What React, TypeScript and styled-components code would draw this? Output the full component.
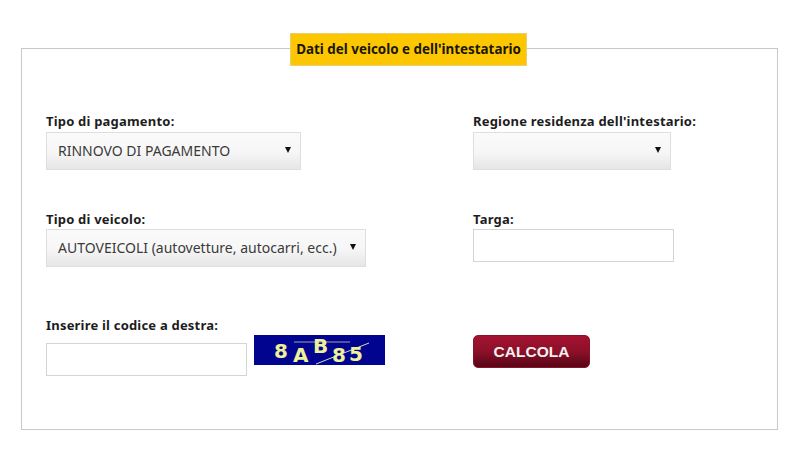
import React from "react";
import styled, { createGlobalStyle } from "styled-components";

const Global = createGlobalStyle`
  html, body { margin: 0; padding: 0; background: #fff; }
  body { width: 800px; height: 453px; overflow: hidden; font-family: "Noto Sans", "Open Sans", sans-serif; }
`;

const Page = styled.div`
  padding: 48px 22px 0 21px;
`;

const Panel = styled.section`
  position: relative;
  box-sizing: border-box;
  height: 382px;
  border: 1px solid #c9c9c9;
  padding: 63px 0 0 24px;
  display: grid;
  grid-template-columns: 427px 1fr;
  grid-template-rows: 98px 106px 1fr;
`;

const Legend = styled.h2`
  position: absolute;
  top: -16px;
  left: 268px;
  box-sizing: border-box;
  width: 237px;
  height: 33px;
  margin: 0;
  background: #fcc700;
  border: 1px solid #e8cf74;
  color: #1a1604;
  font-size: 13.4px;
  font-weight: 700;
  line-height: 30px;
  text-align: center;
  white-space: nowrap;
`;

const Field = styled.div`
  display: flex;
  flex-direction: column;
  align-items: flex-start;
`;

const Label = styled.label<{ $h?: number }>`
  height: ${(p) => p.$h ?? 20}px;
  color: #1d1d1d;
  font-size: 13px;
  font-weight: 700;
  line-height: 18px;
  letter-spacing: 0.2px;
  white-space: nowrap;
`;

const Select = styled.div<{ $w: number }>`
  box-sizing: border-box;
  width: ${(p) => p.$w}px;
  height: 38px;
  display: flex;
  align-items: center;
  justify-content: space-between;
  padding: 0 9px 2px 11px;
  border: 1px solid #dedede;
  background: linear-gradient(#fafafa 0%, #f7f7f7 50%, #e6e6e6 100%);
  color: #3a3a3a;
  font-size: 14px;
  white-space: nowrap;
`;

const Arrow = styled.svg`
  width: 6px;
  height: 6px;
  flex: none;
`;

const Input = styled.div<{ $w: number }>`
  box-sizing: border-box;
  width: ${(p) => p.$w}px;
  height: 33px;
  background: #fff;
  border: 1px solid #d4d4d4;
`;

const CaptchaRow = styled.div`
  display: flex;
  align-items: flex-start;
  gap: 7px;
  margin-top: -1px;
`;

const CaptchaInput = styled(Input)`
  margin-top: 8px;
`;

const Captcha = styled.svg`
  width: 131px;
  height: 30px;
  flex: none;
  overflow: visible;
`;

const Button = styled.button`
  box-sizing: border-box;
  width: 117px;
  height: 33px;
  margin-top: 19px;
  padding: 0;
  border: 1px solid #8e1029;
  border-radius: 5px;
  background: linear-gradient(#a31331 0%, #8d0f28 50%, #560617 100%);
  color: #f2f2f2;
  font-family: "Liberation Sans", Arial, sans-serif;
  font-size: 15.5px;
  font-weight: 700;
`;

const DownArrow = () => (
  <Arrow viewBox="0 0 6 6">
    <path d="M0 0H6L3 6Z" fill="#111" />
  </Arrow>
);

export default function App() {
  return (
    <Page>
      <Global />
      <Panel>
        <Legend>Dati del veicolo e dell'intestatario</Legend>
        <Field>
          <Label>Tipo di pagamento:</Label>
          <Select $w={255}>
            RINNOVO DI PAGAMENTO
            <DownArrow />
          </Select>
        </Field>
        <Field>
          <Label>Regione residenza dell'intestario:</Label>
          <Select $w={198}>
            <span />
            <DownArrow />
          </Select>
        </Field>
        <Field>
          <Label $h={19}>Tipo di veicolo:</Label>
          <Select $w={320}>
            AUTOVEICOLI (autovetture, autocarri, ecc.)
            <DownArrow />
          </Select>
        </Field>
        <Field>
          <Label $h={19}>Targa:</Label>
          <Input $w={201} />
        </Field>
        <Field>
          <Label>Inserire il codice a destra:</Label>
          <CaptchaRow>
            <CaptchaInput $w={201} />
            <Captcha viewBox="0 0 131 30">
              <rect width="131" height="30" fill="#00048f" />
              <line x1="40" y1="7" x2="96" y2="7" stroke="#c9cfa8" strokeWidth="0.8" />
              <line x1="62" y1="29" x2="115" y2="8" stroke="#d8dcc0" strokeWidth="1" />
              <g fill="#eef09a" fontFamily="'DejaVu Sans', sans-serif" fontWeight="700" fontSize="20">
                <text x="20" y="23">8</text>
                <text x="39" y="27">A</text>
                <text x="59" y="18">B</text>
                <text x="78" y="27">8</text>
                <text x="95" y="26">5</text>
              </g>
            </Captcha>
          </CaptchaRow>
        </Field>
        <Field>
          <Button>CALCOLA</Button>
        </Field>
      </Panel>
    </Page>
  );
}
